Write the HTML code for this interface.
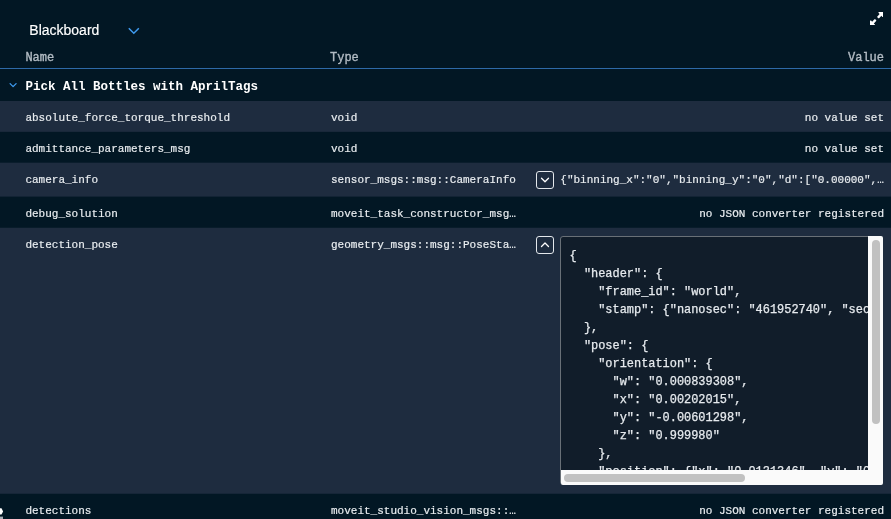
<!DOCTYPE html>
<html lang="en">
<head>
<meta charset="utf-8">
<title>Blackboard</title>
<style>
  html, body { margin: 0; padding: 0; }
  body {
    width: 891px; height: 519px; overflow: hidden; position: relative;
    background: #021724;
    font-family: "Liberation Mono", "DejaVu Sans Mono", monospace;
    color: #e8ecef;
  }
  #root { position: absolute; left: 0; top: 0; width: 891px; height: 519px; overflow: hidden; will-change: transform; }
  .abs { position: absolute; }
  .title {
    left: 29.3px; top: 21px; font-family: "Liberation Sans", sans-serif;
    font-size: 14px; line-height: 18px; color: #ffffff; -webkit-text-stroke: 0.15px #ffffff;
  }
  .hdr { top: 49.5px; font-size: 12px; line-height: 16px; color: #b3bcc4; -webkit-text-stroke: 0.35px #b3bcc4; }
  .hline { left: 0; top: 68px; width: 891px; height: 1px; background: #2e6aa8; }
  .group { left: 25.4px; top: 77.5px; font-size: 12.5px; line-height: 18px; font-weight: bold; color: #ffffff; }
  .row { left: 0; width: 891px; }
  .cell { position: absolute; font-size: 11px; line-height: 14px; white-space: pre; color: #e9edf0; -webkit-text-stroke: 0.18px #e9edf0; }
  .name { left: 25.4px; }
  .type { left: 331px; }
  .val { right: 7px; text-align: right; }
  .btn {
    position: absolute; left: 536px; width: 16px; height: 16px;
    border: 1px solid #e4e8ec; border-radius: 3px;
  }
  .btn svg { position: absolute; left: 0; top: 0; }
  .json {
    left: 560.3px; top: 236.2px; width: 323px; height: 248.7px;
    border: 1px solid #697077; border-radius: 3px; background: #111d2a;
    box-sizing: border-box;
  }
  .jsonclip { position: absolute; left: 0; top: 0; width: 306.7px; height: 232.5px; overflow: hidden; }
  .json pre {
    margin: 0; position: absolute; left: 8.3px; top: 9.4px;
    font-family: "Liberation Mono", "DejaVu Sans Mono", monospace;
    font-size: 11.93px; line-height: 18px; color: #e6eaee; -webkit-text-stroke: 0.25px #e6eaee;
  }
  .vtrack { position: absolute; right: -1px; top: -1px; width: 15.3px; height: 248.7px; background: #fafafa; border-radius: 0 2px 2px 0; }
  .vthumb { position: absolute; left: 4px; top: 3.7px; width: 8px; height: 183.7px; border-radius: 4px; background: #c1c1c1; }
  .htrack { position: absolute; left: -0.5px; bottom: -1px; width: 308.2px; height: 15.3px; background: #fafafa; border-radius: 0 0 0 2px; }
  .hthumb { position: absolute; left: 3.7px; top: 4.2px; width: 181px; height: 8px; border-radius: 4px; background: #c1c1c1; }
</style>
</head>
<body>
<div id="root">
  <svg class="abs" style="left:0;top:0" width="891" height="519" viewBox="0 0 891 519">
    <rect x="0" y="101" width="891" height="30.85" fill="#1e2c3f"/>
    <rect x="0" y="162.7" width="891" height="33.9" fill="#1e2c3f"/>
    <rect x="0" y="227.75" width="891" height="266" fill="#1e2c3f"/>
    <path d="M0 508.2 H1.5 L3.1 511.4 L1.5 514.6 H0 Z" fill="#ffffff"/>
    <rect x="0" y="516.6" width="3" height="2.4" fill="#aab1b8"/>
  </svg>
  <div class="abs title">Blackboard</div>
  <svg class="abs" style="left:127px;top:25px" width="14" height="12" viewBox="0 0 14 12"><path d="M1.8 3.2 L6.8 8.3 L11.8 3.2" fill="none" stroke="#3f9bf0" stroke-width="1.5" stroke-linecap="butt" stroke-linejoin="miter"/></svg>
  <svg class="abs" style="left:869.9px;top:11.8px" width="13.5" height="13.5" viewBox="0 0 512 512"><path fill="#ffffff" d="M344 0H488c13.300 0 24 10.700 24 24V168c0 9.700-5.800 18.500-14.800 22.200s-19.300 1.700-26.200-5.200l-39-39-87 87c-9.400 9.400-24.600 9.400-33.900 0l-32-32c-9.400-9.400-9.400-24.600 0-33.900l87-87L327 41c-6.900-6.900-8.900-17.200-5.200-26.200S334.300 0 344 0zM168 512H24c-13.300 0-24-10.700-24-24V344c0-9.700 5.800-18.500 14.800-22.200s19.300-1.700 26.200 5.200l39 39 87-87c9.400-9.400 24.600-9.400 33.900 0l32 32c9.400 9.400 9.400 24.600 0 33.900l-87 87 39 39c6.900 6.900 8.900 17.200 5.200 26.200s-12.500 14.800-22.200 14.800z"/></svg>

  <div class="abs hdr" style="left:25.4px">Name</div>
  <div class="abs hdr" style="left:330px">Type</div>
  <div class="abs hdr" style="right:7px">Value</div>
  <div class="abs hline"></div>

  <svg class="abs" style="left:8px;top:80px" width="12" height="10" viewBox="0 0 12 10"><path d="M2.1 3.6 L5.1 6.6 L8.1 3.6" fill="none" stroke="#3f9bf0" stroke-width="1.3" stroke-linecap="round" stroke-linejoin="round"/></svg>
  <div class="abs group">Pick All Bottles with AprilTags</div>

  <div class="abs row alt" style="top:101px;height:31px">
    <div class="cell name" style="top:10px">absolute_force_torque_threshold</div>
    <div class="cell type" style="top:10px">void</div>
    <div class="cell val" style="top:10px">no value set</div>
  </div>
  <div class="abs row" style="top:132px;height:31px">
    <div class="cell name" style="top:10px">admittance_parameters_msg</div>
    <div class="cell type" style="top:10px">void</div>
    <div class="cell val" style="top:10px">no value set</div>
  </div>
  <div class="abs row alt" style="top:163px;height:34px">
    <div class="cell name" style="top:10px">camera_info</div>
    <div class="cell type" style="top:10px">sensor_msgs::msg::CameraInfo</div>
    <div class="btn" style="top:8px"><svg width="16" height="16" viewBox="0 0 16 16"><path d="M4.5 6.2 L8 9.7 L11.5 6.2" fill="none" stroke="#ffffff" stroke-width="1.3" stroke-linecap="round" stroke-linejoin="round"/></svg></div>
    <div class="cell" style="left:560.3px;top:10px">{"binning_x":"0","binning_y":"0","d":["0.00000",…</div>
  </div>
  <div class="abs row" style="top:197px;height:31px">
    <div class="cell name" style="top:10px">debug_solution</div>
    <div class="cell type" style="top:10px">moveit_task_constructor_msg…</div>
    <div class="cell val" style="top:10px">no JSON converter registered</div>
  </div>
  <div class="abs row alt" style="top:228px;height:265px">
    <div class="cell name" style="top:10px">detection_pose</div>
    <div class="cell type" style="top:10px">geometry_msgs::msg::PoseSta…</div>
    <div class="btn" style="top:8px"><svg width="16" height="16" viewBox="0 0 16 16"><path d="M4.5 9.5 L8 6 L11.5 9.5" fill="none" stroke="#ffffff" stroke-width="1.3" stroke-linecap="round" stroke-linejoin="round"/></svg></div>
  </div>
  <div class="abs json"><div class="jsonclip">
<pre>{
  "header": {
    "frame_id": "world",
    "stamp": {"nanosec": "461952740", "sec": "0"}
  },
  "pose": {
    "orientation": {
      "w": "0.000839308",
      "x": "0.00202015",
      "y": "-0.00601298",
      "z": "0.999980"
    },
    "position": {"x": "0.0131346", "y": "0", "z": "0"}
  }
}</pre></div>
    <div class="vtrack"><div class="vthumb"></div></div>
    <div class="htrack"><div class="hthumb"></div></div>
  </div>
  <div class="abs row" style="top:494px;height:25px">
    <div class="cell name" style="top:9.5px">detections</div>
    <div class="cell type" style="top:9.5px">moveit_studio_vision_msgs::…</div>
    <div class="cell val" style="top:9.5px">no JSON converter registered</div>
  </div>
</div>
</body>
</html>
